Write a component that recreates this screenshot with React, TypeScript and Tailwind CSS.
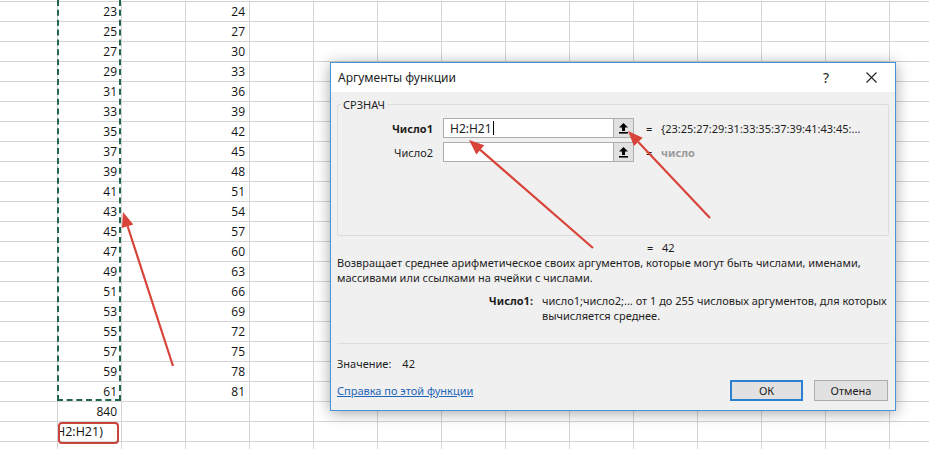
import React from "react";

const COLS = 15;
const ROWS = 23;

const colB = (r: number) => (r < 20 ? String(23 + 2 * r) : r === 20 ? "840" : "");
const colD = (r: number) => (r < 20 ? String(24 + 3 * r) : "");

function RefButton() {
  return (
    <div className="w-[21px] h-[20px] bg-[#e1e1e1] border border-[#adadad] flex items-center justify-center">
      <svg width="11" height="12" viewBox="0 0 11 12">
        <path d="M5.5 1 L10 5.5 L7 5.5 L7 9 L4 9 L4 5.5 L1 5.5 Z" fill="#000" />
        <rect x="1" y="10" width="9" height="1.6" fill="#000" />
      </svg>
    </div>
  );
}

function ArgRow({ label, value, bold, muted }: { label: string; value: string; bold?: boolean; muted?: boolean }) {
  return (
    <div className="flex items-center h-[20px] whitespace-nowrap">
      <div className={`w-[95px] text-right ${bold ? "font-bold" : ""}`}>{label}</div>
      <div className="ml-[10px] w-[170px] h-[20px] bg-white border border-[#adadad] border-r-0 pl-[6px] flex items-center text-[12px]">
        {value}
        {value && <span className="inline-block w-px h-[14px] bg-black ml-px" />}
      </div>
      <RefButton />
      <div className="ml-[12px] w-[15px]">=</div>
      <div className={muted ? "text-[#9a9a9a] font-bold" : ""}>
        {muted ? "число" : "{23:25:27:29:31:33:35:37:39:41:43:45:..."}
      </div>
    </div>
  );
}

function Dialog() {
  return (
    <div className="absolute left-[330px] top-[62px] w-[566px] h-[349px] border border-[#4a94d6] bg-[#f0f0f0] shadow-[0_2px_14px_rgba(0,0,0,0.35)] text-[11px] text-[#1e1e1e] font-['Noto_Sans',sans-serif] leading-[15px] flex flex-col">
      <div className="h-[29px] bg-white flex items-center pl-[7px] shrink-0">
        <span className="text-[12px]">Аргументы функции</span>
        <span className="ml-auto text-[14px] mr-[37px]">?</span>
        <svg width="11" height="11" viewBox="0 0 11 11" className="mr-[18px]">
          <path d="M0.5 0.5 L10.5 10.5 M10.5 0.5 L0.5 10.5" stroke="#222" strokeWidth="1.1" />
        </svg>
      </div>

      <fieldset className="mt-[5px] mx-[6px] h-[139px] border border-[#dcdcdc] rounded-[2px] px-0 shrink-0">
        <legend className="ml-[3px] px-[2px]">СРЗНАЧ</legend>
        <div className="mt-[6px] flex flex-col gap-[4px]">
          <ArgRow label="Число1" value="H2:H21" bold />
          <ArgRow label="Число2" value="" muted />
        </div>
      </fieldset>

      <div className="mt-[4px] h-[15px] flex pl-[316px] shrink-0">
        <span className="w-[15px]">=</span>
        <span>42</span>
      </div>

      <div className="pl-[6px] whitespace-nowrap shrink-0">
        Возвращает среднее арифметическое своих аргументов, которые могут быть числами, именами,
        <br />
        массивами или ссылками на ячейки с числами.
      </div>

      <div className="mt-[8px] flex shrink-0 whitespace-nowrap">
        <div className="w-[202px] text-right font-bold">Число1:</div>
        <div className="ml-[9px]">
          число1;число2;... от 1 до 255 числовых аргументов, для которых
          <br />
          вычисляется среднее.
        </div>
      </div>

      <div className="mt-[20px] mx-[6px] h-px bg-[#dcdcdc] shrink-0" />

      <div className="mt-[12px] pl-[6px] flex h-[15px] shrink-0">
        <span>Значение:</span>
        <span className="ml-[11px]">42</span>
      </div>

      <div className="mt-[9px] flex items-center pl-[6px] pr-[7px] shrink-0">
        <a className="text-[#1f66b8] underline">Справка по этой функции</a>
        <button className="ml-auto w-[73px] h-[21px] bg-[#e1e1e1] border-2 border-[#2d7fd2]">ОК</button>
        <button className="ml-[11px] w-[74px] h-[21px] bg-[#e1e1e1] border border-[#adadad]">Отмена</button>
      </div>
    </div>
  );
}

function Arrows() {
  const arrows = [
    { x1: 173, y1: 366, x2: 123, y2: 212 },
    { x1: 593, y1: 248, x2: 469, y2: 140 },
    { x1: 710, y1: 218, x2: 628, y2: 131 },
  ];
  return (
    <svg className="absolute left-0 top-0 pointer-events-none" width="929" height="449">
      {arrows.map((a, i) => {
        const dx = a.x2 - a.x1;
        const dy = a.y2 - a.y1;
        const len = Math.hypot(dx, dy);
        const ux = dx / len;
        const uy = dy / len;
        const hl = 15;
        const hw = 6;
        const bx = a.x2 - ux * hl;
        const by = a.y2 - uy * hl;
        const p1 = `${bx - uy * hw},${by + ux * hw}`;
        const p2 = `${bx + uy * hw},${by - ux * hw}`;
        return (
          <g key={i}>
            <line x1={a.x1} y1={a.y1} x2={bx} y2={by} stroke="#d8443a" strokeWidth="2.2" />
            <polygon points={`${a.x2},${a.y2} ${p1} ${p2}`} fill="#d8443a" />
          </g>
        );
      })}
    </svg>
  );
}

export default function App() {
  return (
    <div className="relative w-[929px] h-[449px] overflow-hidden bg-white font-['Open_Sans',sans-serif] text-[12px] text-[#111]">
      <div className="ml-[-6px]">
        <div className="h-[2px] border-b border-[#d4d4d4]" />
        {Array.from({ length: ROWS }).map((_, r) => (
          <div key={r} className="flex h-[20px] border-b border-[#d4d4d4]">
            {Array.from({ length: COLS }).map((_, c) => (
              <div
                key={c}
                className="w-[64px] shrink-0 border-r border-[#d4d4d4] flex items-center justify-end pr-[4px]"
              >
                {c === 1 && r === 21 ? (
                  <div className="w-[61px] h-[22px] -mr-[2px] mt-[2px] border-[2.5px] border-[#c8453c] rounded-[4px] overflow-hidden flex items-center whitespace-nowrap text-[12.5px]">
                    <span className="-ml-[4px]">H2:H21)</span>
                  </div>
                ) : c === 1 ? (
                  colB(r)
                ) : c === 3 ? (
                  colD(r)
                ) : (
                  ""
                )}
              </div>
            ))}
          </div>
        ))}
      </div>

      <div className="absolute left-[57px] top-[-10px] w-[64px] h-[411px] border-2 border-dashed border-[#21664a]" />

      <Dialog />
      <Arrows />
    </div>
  );
}
